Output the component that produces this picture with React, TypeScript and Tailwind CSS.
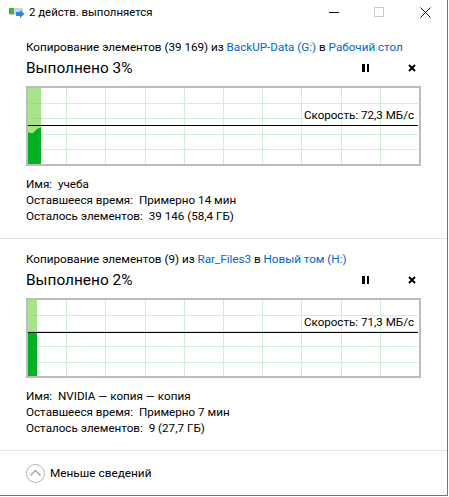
const font = { fontFamily: "Roboto, 'Noto Sans', sans-serif" };

const vLines = [38, 77, 117, 156, 195, 234, 273, 313, 352];

type GraphProps = {
  hLines: number[];
  lineY: number;
  barWidth: number;
  surface: string;
  speed: string;
};

function Graph({ hLines, lineY, barWidth, surface, speed }: GraphProps) {
  return (
    <div className="relative mt-[7px] ml-[26px] h-[80px] w-[395px] border-2 border-[#bdbdbd] bg-white">
      <svg width="391" height="76" viewBox="0 0 391 76" shapeRendering="crispEdges" className="block">
        {vLines.map((x) => (
          <rect key={x} x={x} y="0" width="1" height="76" fill="#cfeed3" />
        ))}
        {hLines.map((y) => (
          <rect key={y} x="0" y={y} width="390" height="1" fill="#cfeed3" />
        ))}
        <rect x="0" y="0" width={barWidth} height="76" fill="#a8e48c" />
        {hLines.map((y) => (
          <rect key={y} x="0" y={y} width={barWidth} height="1" fill="#9bdc84" />
        ))}
        <polygon points={surface} fill="#06b025" shapeRendering="auto" />
        <rect x="0" y={lineY} width="390" height="1" fill="#000000" />
      </svg>
      <div className="absolute right-[5px] text-[11.6px] leading-4 text-black" style={{ top: lineY - 18 }}>
        Скорость: {speed}
      </div>
    </div>
  );
}

type TaskProps = {
  count: string;
  from: string;
  to: string;
  percent: string;
  name: string;
  time: string;
  left: string;
  top: string;
  children: React.ReactNode;
};

function Task({ count, from, to, percent, name, time, left, top, children }: TaskProps) {
  return (
    <section className={`${top} pb-[14px] border-b border-[#e3e3e3]`}>
      <div className="ml-[26px] h-4 text-[11.66px] leading-4 text-black whitespace-nowrap">
        Копирование элементов ({count}) из <span className="text-[#0066cc]">{from}</span> в{" "}
        <span className="text-[#0066cc]">{to}</span>
      </div>
      <div className="mt-[2px] flex h-[22px] items-center pl-[26px] pr-[31px]">
        <div className="flex-1 text-[15.4px] leading-[22px] text-black">Выполнено {percent}</div>
        <svg width="7" height="8" viewBox="0 0 7 8" shapeRendering="crispEdges">
          <rect x="0" y="0" width="2.5" height="8" fill="#000" />
          <rect x="4.5" y="0" width="2.5" height="8" fill="#000" />
        </svg>
        <svg width="8" height="8" viewBox="0 0 8 8" className="ml-[39px]">
          <path d="M1 1L7 7M7 1L1 7" stroke="#000" strokeWidth="2" />
        </svg>
      </div>
      {children}
      <div className="mt-[10px] ml-[26px] text-[11.66px] leading-4 text-black">
        <div>Имя:&nbsp; {name}</div>
        <div>Оставшееся время:&nbsp; {time}</div>
        <div>Осталось элементов:&nbsp; {left}</div>
      </div>
    </section>
  );
}

export default function App() {
  return (
    <div className="h-[497px] w-[449px] bg-white" style={font}>
      <div className="h-[496px] w-[448px] border-r border-b border-[#2e9a5f]">
        <header className="flex h-6 items-center pl-[9px] pr-[16px]">
          <svg width="16" height="11" viewBox="0 0 16 11" className="mt-[3px]">
            <rect x="0" y="0" width="14" height="7" fill="#d4d4d4" />
            <rect x="0" y="0" width="5" height="6" fill="#3fb53f" />
            <path d="M7 3H11V1L15.5 5L11 9V7H7Z" transform="translate(0 1)" fill="#2b87e0" />
          </svg>
          <span className="ml-[4px] flex-1 text-[11.4px] leading-4 text-black">2 действ. выполняется</span>
          <svg width="10" height="1" viewBox="0 0 10 1" shapeRendering="crispEdges">
            <rect width="10" height="1" fill="#000" />
          </svg>
          <svg width="10" height="10" viewBox="0 0 10 10" className="ml-[35px]" shapeRendering="crispEdges">
            <rect x="0.5" y="0.5" width="9" height="9" fill="none" stroke="#cccccc" />
          </svg>
          <svg width="11" height="11" viewBox="0 0 11 11" className="ml-[36px]">
            <path d="M0.5 0.5L10.5 10.5M10.5 0.5L0.5 10.5" stroke="#111" strokeWidth="1" />
          </svg>
        </header>

        <Task
          top="pt-[15px]"
          count="39 169"
          from="BackUP-Data (G:)"
          to="Рабочий стол"
          percent="3%"
          name="учеба"
          time="Примерно 14 мин"
          left="39 146 (58,4 ГБ)"
        >
          <Graph
            hLines={[15, 30, 46, 61]}
            lineY={37}
            barWidth={13}
            surface="0,44 2,45 5,45 7,43 9,41 13,39 13,76 0,76"
            speed="72,3 МБ/с"
          />
        </Task>

        <Task
          top="pt-[12px]"
          count="9"
          from="Rar_Files3"
          to="Новый том (H:)"
          percent="2%"
          name="NVIDIA — копия — копия"
          time="Примерно 7 мин"
          left="9 (27,7 ГБ)"
        >
          <Graph
            hLines={[15, 31, 46, 62]}
            lineY={32}
            barWidth={9}
            surface="0,33 9,33 9,76 0,76"
            speed="71,3 МБ/с"
          />
        </Task>

        <footer className="flex h-11 items-center pl-[26px]">
          <svg width="19" height="19" viewBox="0 0 19 19">
            <circle cx="9.5" cy="9.5" r="9" fill="none" stroke="#b4b4b4" />
            <path d="M4.5 11.5L9.5 6.5L14.5 11.5" fill="none" stroke="#a8a8a8" strokeWidth="1.5" />
          </svg>
          <span className="ml-[5px] text-[11.8px] leading-4 text-black">Меньше сведений</span>
        </footer>
      </div>
    </div>
  );
}
